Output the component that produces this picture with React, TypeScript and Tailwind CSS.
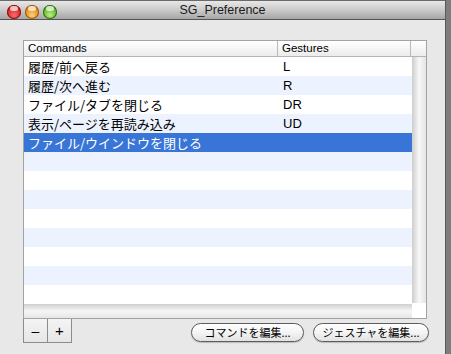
import React from "react";

const rows: { cmd: string; g: string }[] = [
  { cmd: "履歴/前へ戻る", g: "L" },
  { cmd: "履歴/次へ進む", g: "R" },
  { cmd: "ファイル/タブを閉じる", g: "DR" },
  { cmd: "表示/ページを再読み込み", g: "UD" },
  { cmd: "ファイル/ウインドウを閉じる", g: "" },
  ...Array.from({ length: 8 }, () => ({ cmd: "", g: "" })),
];

const jp = { fontFamily: '"Noto Sans CJK JP", "Liberation Sans", sans-serif' };
const lat = { fontFamily: '"Liberation Sans", "Noto Sans CJK JP", sans-serif' };

function Light({ from, to, ring }: { from: string; to: string; ring: string }) {
  return (
    <div
      className="w-[14px] h-[14px] rounded-full relative"
      style={{
        background: `radial-gradient(circle at 50% 72%, ${from} 0%, ${to} 78%)`,
        boxShadow: `inset 0 0 0 1px ${ring}`,
      }}
    >
      <div className="absolute left-[3px] top-[1px] w-[8px] h-[5px] rounded-full bg-white/70" />
    </div>
  );
}

export default function App() {
  return (
    <div className="w-[451px] h-[354px] bg-[#7d7d7d] overflow-hidden relative">
      <div className="w-[446px] h-[354px] flex flex-col bg-[#e8e8e8] border-r border-[#5a5a5a]">
        {/* title bar */}
        <div className="h-[20px] shrink-0 relative flex items-center justify-center bg-gradient-to-b from-[#e8e8e8] via-[#cacaca] to-[#a6a6a6] border-t border-[#6a6a6a] border-b border-b-[#555555]">
          <div className="absolute left-[7px] top-[4px] flex gap-[4px]">
            <Light from="#ff6a6a" to="#c81515" ring="#8a1010" />
            <Light from="#ffd070" to="#d8780a" ring="#9a5a08" />
            <Light from="#b8f07a" to="#4aa31a" ring="#2f6d10" />
          </div>
          <span className="text-[12.5px] leading-none text-[#1a1a1a] pt-[1px]" style={lat}>
            SG_Preference
          </span>
        </div>

        {/* content */}
        <div className="flex flex-col pl-[23px] pt-[20px]">
          <div className="w-[404px] h-[279px] border border-[#a3a3a3] flex flex-col bg-white">
            {/* header */}
            <div className="h-[16px] shrink-0 flex border-b border-[#b4b4b4] bg-gradient-to-b from-[#ffffff] to-[#ececec] text-[11.5px] leading-[15px] text-black" style={lat}>
              <div className="w-[254px] pl-[4px] border-r border-[#b8b8b8]">Commands</div>
              <div className="w-[133px] pl-[4px] border-r border-[#b8b8b8]">Gestures</div>
              <div className="flex-1" />
            </div>
            {/* body */}
            <div className="flex flex-1">
              <div className="w-[388px] flex flex-col">
                {rows.map((r, i) => {
                  const sel = i === 4;
                  const bg = sel ? "bg-[#3875d7] text-white" : i % 2 === 1 ? "bg-[#edf3fe] text-black" : "bg-white text-black";
                  return (
                    <div key={i} className={`h-[19px] flex items-center ${bg}`}>
                      <div className="w-[254px] pl-[4px] text-[13px] leading-[19px] whitespace-nowrap" style={jp}>
                        {r.cmd}
                      </div>
                      <div className="pl-[5px] text-[13px] leading-[19px]" style={lat}>
                        {r.g}
                      </div>
                    </div>
                  );
                })}
                <div className="flex-1 bg-gradient-to-b from-[#cfcfcf] via-[#f6f6f6] to-[#e6e6e6]" />
              </div>
              <div className="flex-1 flex flex-col">
                <div className="flex-1 bg-gradient-to-r from-[#cdcdcd] via-[#f8f8f8] to-[#e4e4e4]" />
                <div className="h-[15px] bg-white" />
              </div>
            </div>
          </div>

          {/* bottom controls */}
          <div className="flex items-start">
            <div className="flex">
              <div className="w-[25px] h-[24px] border border-t-0 border-[#8c8c8c] bg-gradient-to-b from-[#f4f4f4] to-[#e6e6e6] flex items-center justify-center text-[14px] leading-none text-black" style={lat}>
                –
              </div>
              <div className="w-[24px] h-[24px] border border-t-0 border-l-0 border-[#8c8c8c] bg-gradient-to-b from-[#f4f4f4] to-[#e6e6e6] flex items-center justify-center text-[15px] leading-none text-black" style={lat}>
                +
              </div>
            </div>
            <div className="ml-[119px] mt-[4px] flex gap-[9px]">
              <button className="w-[113px] h-[19px] rounded-full border border-[#5c5c5c] bg-gradient-to-b from-[#ffffff] via-[#f4f4f4] to-[#e2e2e2] shadow-[0_1px_1px_rgba(0,0,0,0.2)] text-[11px] leading-none text-black flex items-center justify-center" style={jp}>
                コマンドを編集...
              </button>
              <button className="w-[116px] h-[19px] rounded-full border border-[#5c5c5c] bg-gradient-to-b from-[#ffffff] via-[#f4f4f4] to-[#e2e2e2] shadow-[0_1px_1px_rgba(0,0,0,0.2)] text-[11px] leading-none text-black flex items-center justify-center" style={jp}>
                ジェスチャを編集...
              </button>
            </div>
          </div>
        </div>
      </div>
    </div>
  );
}
